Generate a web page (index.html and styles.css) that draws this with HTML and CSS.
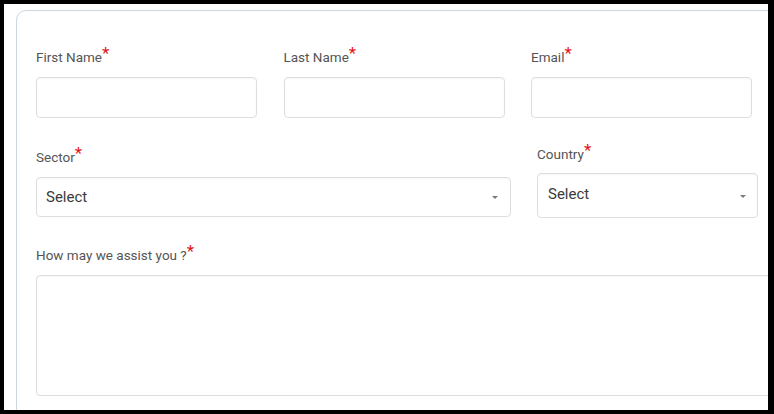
FILE: index.html
```html
<!DOCTYPE html>
<html lang="en">
<head>
    <meta charset="UTF-8">
    <meta name="viewport" content="width=device-width, initial-scale=1.0">
    <title>Contact Form</title>
    <link rel="stylesheet" href="styles.css">
</head>
<body>
    <div class="screen">
        <div class="card">
            <div class="row row-three">
                <div class="field">
                    <label for="first">First Name<span class="req">*</span></label>
                    <input type="text" id="first">
                </div>
                <div class="field">
                    <label for="last">Last Name<span class="req">*</span></label>
                    <input type="text" id="last">
                </div>
                <div class="field">
                    <label for="email">Email<span class="req">*</span></label>
                    <input type="text" id="email">
                </div>
            </div>

            <div class="row row-two">
                <div class="field field-sector">
                    <label for="sector">Sector<span class="req">*</span></label>
                    <div class="select-wrap">
                        <select id="sector">
                            <option>Select</option>
                        </select>
                    </div>
                </div>
                <div class="field field-country">
                    <label for="country">Country<span class="req">*</span></label>
                    <div class="select-wrap select-tall">
                        <select id="country">
                            <option>Select</option>
                        </select>
                    </div>
                </div>
            </div>

            <div class="field field-message">
                <label for="message">How may we assist you ?<span class="req">*</span></label>
                <textarea id="message"></textarea>
            </div>
        </div>
    </div>
</body>
</html>
```

FILE: styles.css
```css
* {
    box-sizing: border-box;
}

body {
    margin: 0;
    background: #000;
    font-family: Roboto, 'Noto Sans', Arial, sans-serif;
}

.screen {
    width: 774px;
    height: 414px;
    border-style: solid;
    border-color: #000;
    border-width: 4px 6px 4px 4px;
    background: #ffffff;
    overflow: hidden;
}

.card {
    width: 820px;
    height: 460px;
    margin: 6px 0 0 12px;
    padding: 35px 0 0 19px;
    border: 1px solid #cdd7e1;
    border-radius: 10px;
}

.row {
    display: flex;
    align-items: flex-start;
}

.row-three {
    gap: 26.5px;
}

.row-three .field {
    width: 221px;
}

.row-two {
    gap: 26px;
    margin-top: 25px;
}

label {
    display: block;
    height: 20px;
    line-height: 20px;
    margin-bottom: 11px;
    font-size: 13.5px;
    color: #555;
}

.req {
    color: #e3151a;
    font-size: 17px;
    position: relative;
    top: -3px;
}

input,
select,
textarea {
    display: block;
    width: 100%;
    margin: 0;
    border: 1px solid #dcdfe2;
    border-radius: 4px;
    background: #fff;
    box-shadow: inset 0 1px 2px rgba(0, 0, 0, 0.04);
    font-family: inherit;
    outline: none;
}

input {
    height: 41px;
}

.field-sector {
    width: 475px;
    padding-top: 3px;
}

.field-country {
    width: 221px;
}

.field-country label {
    margin-bottom: 10px;
}

.select-wrap {
    position: relative;
}

.select-wrap::after {
    content: '';
    position: absolute;
    right: 13px;
    top: 50%;
    margin-top: -1px;
    border-left: 3px solid transparent;
    border-right: 3px solid transparent;
    border-top: 3px solid #7a7a7a;
}

select {
    height: 40px;
    padding: 0 0 0 9px;
    appearance: none;
    -webkit-appearance: none;
    font-size: 15px;
    color: #3a3a3a;
}

.select-tall select {
    height: 45px;
    padding: 0 0 4px 10px;
}

.select-tall::after {
    right: 12px;
}

.field-message {
    margin-top: 26px;
}

textarea {
    width: 740px;
    height: 121px;
    resize: none;
}
```
